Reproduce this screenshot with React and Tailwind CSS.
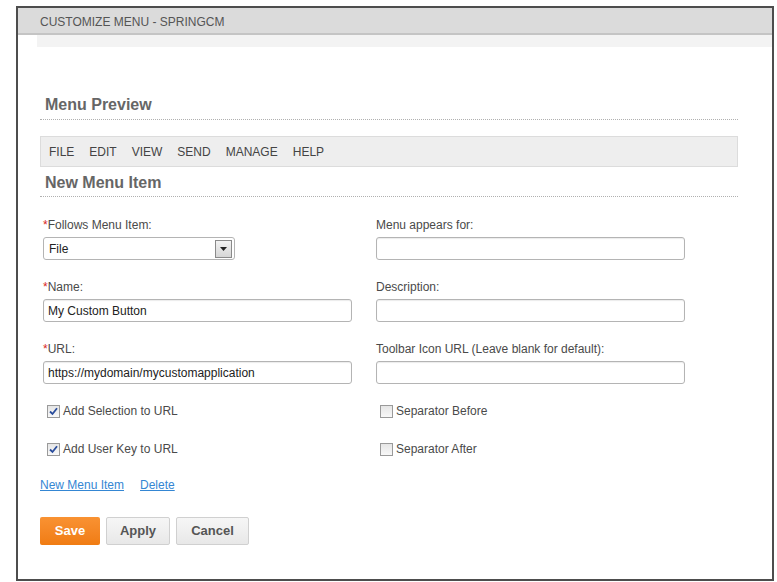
import { useState } from 'react';

const font = { fontFamily: '"Liberation Sans", Arial, sans-serif' };

function Field({ label, required, children }) {
  return (
    <div className="flex flex-col">
      <label className="text-[12px] leading-[14px] text-[#4a4a4a] mb-[5px]">
        {required && <span className="text-[#d9261c]">*</span>}
        {label}
      </label>
      {children}
    </div>
  );
}

function TextInput({ value }) {
  return (
    <input
      type="text"
      defaultValue={value}
      className="w-full h-[23px] border border-[#b4b4b4] rounded-[3px] bg-white px-[4px] text-[12px] text-[#222] shadow-[inset_0_1px_1px_rgba(0,0,0,0.08)] focus:outline-none"
    />
  );
}

function Check({ checked, label, onToggle }) {
  return (
    <button type="button" onClick={onToggle} className="flex items-center h-[16px] ml-[4px] gap-[3px] text-left">
      <span className="w-[13px] h-[13px] border border-[#9a9a9a] bg-gradient-to-b from-[#e6e6e6] to-[#f8f8f8] flex items-center justify-center">
        {checked && (
          <svg width="9" height="9" viewBox="0 0 9 9">
            <path d="M1 4.5 L3.5 7 L8 1.2" fill="none" stroke="#2a4d9c" strokeWidth="1.8" />
          </svg>
        )}
      </span>
      <span className="text-[12px] leading-[14px] text-[#4a4a4a]">{label}</span>
    </button>
  );
}

export default function App() {
  const [checks, setChecks] = useState({ sel: true, key: true, before: false, after: false });
  const toggle = k => setChecks(c => ({ ...c, [k]: !c[k] }));
  const menu = ['FILE', 'EDIT', 'VIEW', 'SEND', 'MANAGE', 'HELP'];

  return (
    <div className="w-[777px] h-[582px] bg-white pt-[6px] pl-[16px]" style={font}>
      <div className="w-[758px] h-[575px] border-2 border-[#4d4d4d] flex flex-col">
        {/* Title bar */}
        <div className="h-[27px] bg-[#dbdbdb] border-b-2 border-[#c4c4c4] flex items-center pl-[22px] pt-[2px]">
          <span className="text-[12px] text-[#555]">CUSTOMIZE MENU - SPRINGCM</span>
        </div>
        <div className="h-[12px] ml-[19px] bg-[#f3f3f3]" />

        <div className="pl-[22px] w-[720px]">
          {/* Menu Preview */}
          <div className="mt-[48px] pl-[5px] pb-[4px] border-b border-dotted border-[#b0b0b0] text-[16px] leading-[20px] font-bold text-[#666]">
            Menu Preview
          </div>
          <div className="mt-[16px] h-[31px] bg-[#eeeeee] border border-[#dcdcdc] flex items-center gap-[15px] pl-[8px]">
            {menu.map(m => (
              <span key={m} className="text-[12px] text-[#444]">{m}</span>
            ))}
          </div>

          {/* New Menu Item */}
          <div className="mt-[6px] pl-[5px] pb-[3px] border-b border-dotted border-[#b0b0b0] text-[16px] leading-[20px] font-bold text-[#666]">
            New Menu Item
          </div>

          <div className="mt-[21px] pl-[3px] grid grid-cols-[309px_309px] gap-x-[24px] gap-y-[20px]">
            <Field label="Follows Menu Item:" required>
              <div className="w-[192px] h-[23px] border border-[#b4b4b4] rounded-[3px] bg-white flex items-center justify-between pl-[5px] pr-[2px]">
                <span className="text-[12px] text-[#222]">File</span>
                <span className="w-[17px] h-[18px] border border-[#8a8a8a] bg-gradient-to-b from-[#f2f2f2] to-[#d6d6d6] flex items-center justify-center">
                  <svg width="7" height="4" viewBox="0 0 7 4"><path d="M0 0 H7 L3.5 4 Z" fill="#222" /></svg>
                </span>
              </div>
            </Field>
            <Field label="Menu appears for:">
              <TextInput value="" />
            </Field>
            <Field label="Name:" required>
              <TextInput value="My Custom Button" />
            </Field>
            <Field label="Description:">
              <TextInput value="" />
            </Field>
            <Field label="URL:" required>
              <TextInput value="https://mydomain/mycustomapplication" />
            </Field>
            <Field label="Toolbar Icon URL (Leave blank for default):">
              <TextInput value="" />
            </Field>
          </div>

          <div className="mt-[19px] pl-[3px] grid grid-cols-[309px_309px] gap-x-[24px] gap-y-[22px]">
            <Check checked={checks.sel} label="Add Selection to URL" onToggle={() => toggle('sel')} />
            <Check checked={checks.before} label="Separator Before" onToggle={() => toggle('before')} />
            <Check checked={checks.key} label="Add User Key to URL" onToggle={() => toggle('key')} />
            <Check checked={checks.after} label="Separator After" onToggle={() => toggle('after')} />
          </div>

          <div className="mt-[21px] flex gap-[16px] text-[12px] leading-[14px]">
            <a href="#" className="text-[#3486d3] underline">New Menu Item</a>
            <a href="#" className="text-[#3486d3] underline">Delete</a>
          </div>

          <div className="mt-[25px] flex gap-[6px]">
            <button className="w-[60px] h-[28px] rounded-[2px] bg-gradient-to-b from-[#f99232] to-[#f07c12] text-white text-[13px] font-bold">
              Save
            </button>
            <button className="w-[64px] h-[28px] rounded-[2px] border border-[#d0d0d0] bg-gradient-to-b from-[#f6f6f6] to-[#e8e8e8] text-[#555] text-[13px] font-bold">
              Apply
            </button>
            <button className="w-[73px] h-[28px] rounded-[2px] border border-[#d0d0d0] bg-gradient-to-b from-[#f6f6f6] to-[#e8e8e8] text-[#555] text-[13px] font-bold">
              Cancel
            </button>
          </div>
        </div>
      </div>
    </div>
  );
}
